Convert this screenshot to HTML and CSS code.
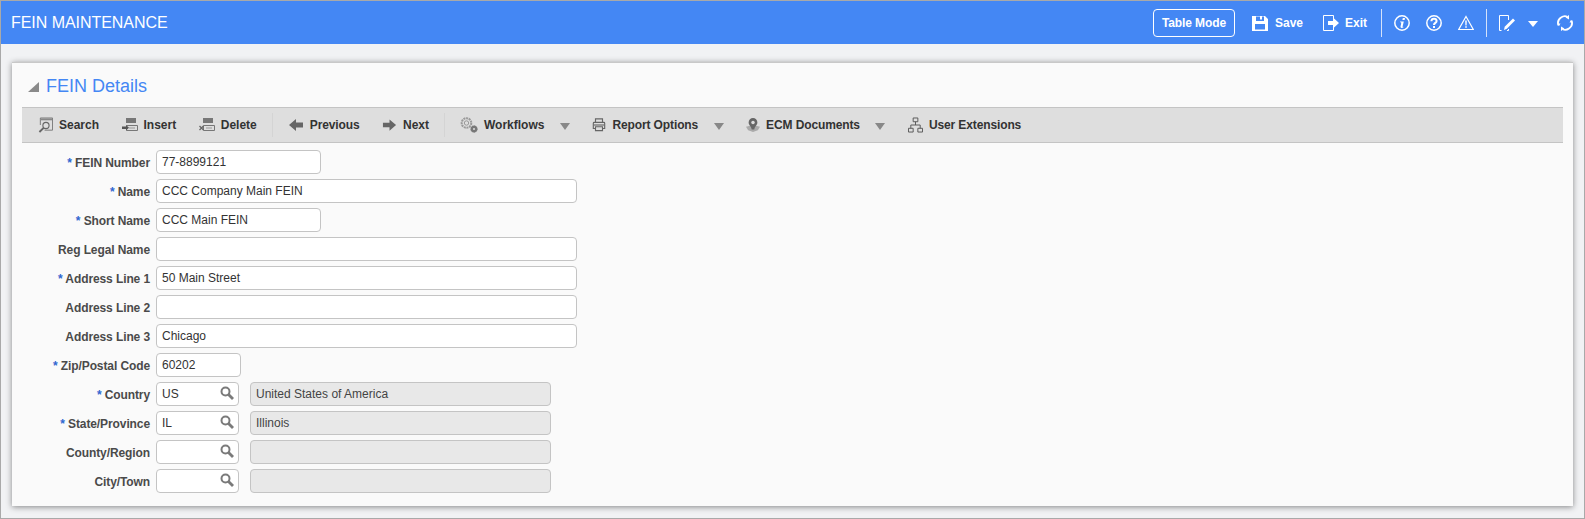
FILE: index.html
```html
<!DOCTYPE html>
<html lang="en">
<head>
<meta charset="utf-8">
<title>FEIN Maintenance</title>
<link rel="stylesheet" href="styles.css">
</head>
<body>
<div class="app">
  <header class="topbar">
    <div class="page-title">FEIN MAINTENANCE</div>
    <div class="top-actions">
      <button class="table-mode">Table Mode</button>
      <span class="top-item save">
        <svg class="top-icon" viewBox="0 0 16 16"><path fill="#fff" fill-rule="evenodd" d="M0 1h13l3 3v12H0zM4 1.500v4.500h8V1.500h-2v3H8v-3zM3 9v5.500h10V9z"/></svg>Save</span>
      <span class="top-item exit">
        <svg class="top-icon" viewBox="0 0 16 16"><path fill="none" stroke="#fff" d="M10.500 4V.5H.5v15h10V12"/><path fill="#fff" d="M5 6h5V2.500l6 5.500-6 5.500V10H5z"/></svg>Exit</span>
      <span class="top-sep"></span>
      <svg class="top-icon glyph" viewBox="0 0 16 16"><circle cx="8" cy="8" r="7.200" fill="none" stroke="#fff" stroke-width="1.500"/><path fill="#fff" d="M8.800 3h2.200l-.4 2h-2.200zM6 6.500h3.800L8.600 11.500q-.1.600.9.300l-.2.800q-3 1-2.800-.8l.8-4q0-.6-1-.6z"/></svg>
      <svg class="top-icon glyph" viewBox="0 0 16 16"><circle cx="8" cy="8" r="7.200" fill="none" stroke="#fff" stroke-width="1.500"/><path fill="none" stroke="#fff" stroke-width="2" d="M5.400 6.200Q5.500 3.800 8 3.800t2.600 2.200c0 2-2.600 1.800-2.600 4"/><rect x="7" y="11" width="2" height="2" fill="#fff"/></svg>
      <svg class="top-icon glyph" viewBox="0 0 16 16"><path fill="none" stroke="#fff" stroke-width="1.200" d="M8 1.500 15.300 14.500H.7z"/><path fill="#fff" d="M7.200 5.500h1.600l-.2 5H7.400zM7.200 11.300h1.600v1.500H7.200z"/></svg>
      <span class="top-sep second"></span>
      <svg class="top-icon" viewBox="0 0 16 16"><path fill="none" stroke="#fff" d="M9.500 5V.5H.5v15h2M9.500 14v1.500H8"/><path fill="#fff" d="M5 15l.7-3.300L14 3.500l2 2-8.200 8.200z"/></svg>
      <span class="top-caret"></span>
      <svg class="top-icon" viewBox="0 0 16 16"><path fill="none" stroke="#fff" stroke-width="1.800" d="M1.500 10.500A6.800 6.800 0 0 1 4 2.500 6.800 6.800 0 0 1 10 1.500M14.500 5.500A6.800 6.800 0 0 1 12 13.500 6.800 6.800 0 0 1 6 14.500"/><path fill="#fff" d="M12 0v4.500L8.500 2.500zM4 16v-4.500L7.500 13.500zM14 5l2 2.500h-3.500zM2 11L0 8.500h3.500z"/></svg>
    </div>
  </header>

  <main class="card">
    <h1 class="card-title"><span class="collapse-tri"></span>FEIN Details</h1>

    <nav class="toolbar">
      <span class="tool"><svg class="tool-icon narrow" viewBox="0 0 16 16"><path fill="none" stroke="#777" d="M2.500 8V.5h13v13H7"/><rect x="3" y="1" width="12" height="2" fill="#888"/><circle cx="8.500" cy="8.500" r="3.300" fill="none" stroke="#666" stroke-width="1.200"/><path stroke="#666" stroke-width="2" d="M6 11l-4.500 4.500"/></svg>Search</span>
      <span class="tool"><svg class="tool-icon" viewBox="0 0 16 16"><path fill="#777" d="M4 1h10v5H4z"/><path fill="none" stroke="#777" d="M4.500 8.500h11v5h-11z"/><path fill="#555" d="M0 9.500h4V8l3 2.800-3 2.800V12H0z"/><path stroke="#999" d="M7 11h6"/></svg>Insert</span>
      <span class="tool"><svg class="tool-icon" viewBox="0 0 16 16"><path fill="#777" d="M4 1h10v5H4z"/><path fill="none" stroke="#777" d="M4.500 8.500h11v5h-11z"/><path stroke="#666" stroke-width="1.300" d="M.5 9l4 4M4.500 9l-4 4"/><path stroke="#999" d="M7 11h6"/></svg>Delete</span>
      <span class="tool-sep"></span>
      <span class="tool"><svg class="tool-icon" viewBox="0 0 16 16"><path fill="#666" d="M1 8l7-6v3.500h7v5H8V14z"/></svg><span class="tight">Previous</span></span>
      <span class="tool"><svg class="tool-icon narrow" viewBox="0 0 16 16"><path fill="#666" d="M15 8L8 2v3.500H1v5h7V14z"/></svg>Next</span>
      <span class="tool-sep"></span>
      <span class="tool"><svg class="tool-icon wide" viewBox="0 0 18 16"><circle cx="6.500" cy="6" r="4.800" fill="none" stroke="#999" stroke-width="2" stroke-dasharray="2 .7"/><circle cx="6.500" cy="6" r="2.200" fill="none" stroke="#999"/><circle cx="14" cy="12" r="3.200" fill="#777" stroke="#777" stroke-dasharray="1.200 .6"/><circle cx="14" cy="12" r="1" fill="#ddd"/></svg>Workflows</span>
      <span class="tool-caret"></span>
      <span class="tool"><svg class="tool-icon narrower" viewBox="0 0 16 16"><path fill="none" stroke="#666" stroke-width="1.300" d="M4 5V1h8v4M4 12H1.500V6q0-1 1-1h11q1 0 1 1v6H12M4 10h8v4.500H4z"/><path stroke="#666" stroke-width="1.300" d="M2 8h12"/></svg><span class="tight">Report Options</span></span>
      <span class="tool-caret"></span>
      <span class="tool"><svg class="tool-icon narrower" viewBox="0 0 16 16"><path fill="#aaa" d="M0 10l8-2 8 2-2.500 4L8 16l-5.500-2z"/><path fill="#666" d="M8 0a5 5 0 0 1 5 5c0 3-3 4-3.500 8h-3C6 9 3 8 3 5a5 5 0 0 1 5-5z"/><circle cx="8" cy="5" r="2" fill="#ddd"/></svg><span class="tight">ECM Documents</span></span>
      <span class="tool-caret"></span>
      <span class="tool"><svg class="tool-icon narrow" viewBox="0 0 16 16"><path fill="none" stroke="#555" d="M5.500.5h5v4h-5zM.5 11.500h5v4h-5zM10.500 11.500h5v4h-5zM8 4.500V8M3 11.500V8h10v3.500"/></svg><span class="tight">User Extensions</span></span>
    </nav>

    <form class="form">
      <div class="row"><label class="label"><span class="req">*</span> FEIN Number</label><input class="input w-md" value="77-8899121"></div>
      <div class="row"><label class="label"><span class="req">*</span> Name</label><input class="input w-lg" value="CCC Company Main FEIN"></div>
      <div class="row"><label class="label"><span class="req">*</span> Short Name</label><input class="input w-md" value="CCC Main FEIN"></div>
      <div class="row"><label class="label">Reg Legal Name</label><input class="input w-lg" value=""></div>
      <div class="row"><label class="label"><span class="req">*</span> Address Line 1</label><input class="input w-lg" value="50 Main Street"></div>
      <div class="row"><label class="label">Address Line 2</label><input class="input w-lg" value=""></div>
      <div class="row"><label class="label">Address Line 3</label><input class="input w-lg" value="Chicago"></div>
      <div class="row"><label class="label"><span class="req">*</span> Zip/Postal Code</label><input class="input w-sm" value="60202"></div>
      <div class="row"><label class="label"><span class="req">*</span> Country</label><span class="lookup"><input class="input w-lookup" value="US"><svg class="mag" viewBox="0 0 14 14"><circle cx="5.500" cy="5.500" r="4" fill="none" stroke="#7a7a7a" stroke-width="2"/><path stroke="#7a7a7a" stroke-width="2.800" d="M8.500 8.500l4.500 4.500"/></svg></span><input class="input desc" value="United States of America" readonly></div>
      <div class="row"><label class="label"><span class="req">*</span> State/Province</label><span class="lookup"><input class="input w-lookup" value="IL"><svg class="mag" viewBox="0 0 14 14"><circle cx="5.500" cy="5.500" r="4" fill="none" stroke="#7a7a7a" stroke-width="2"/><path stroke="#7a7a7a" stroke-width="2.800" d="M8.500 8.500l4.500 4.500"/></svg></span><input class="input desc" value="Illinois" readonly></div>
      <div class="row"><label class="label">County/Region</label><span class="lookup"><input class="input w-lookup" value=""><svg class="mag" viewBox="0 0 14 14"><circle cx="5.500" cy="5.500" r="4" fill="none" stroke="#7a7a7a" stroke-width="2"/><path stroke="#7a7a7a" stroke-width="2.800" d="M8.500 8.500l4.500 4.500"/></svg></span><input class="input desc" value="" readonly></div>
      <div class="row"><label class="label">City/Town</label><span class="lookup"><input class="input w-lookup" value=""><svg class="mag" viewBox="0 0 14 14"><circle cx="5.500" cy="5.500" r="4" fill="none" stroke="#7a7a7a" stroke-width="2"/><path stroke="#7a7a7a" stroke-width="2.800" d="M8.500 8.500l4.500 4.500"/></svg></span><input class="input desc" value="" readonly></div>
    </form>
  </main>
</div>
</body>
</html>
```

FILE: styles.css
```css
* { box-sizing: border-box; }
html, body { margin: 0; padding: 0; height: 519px; overflow: hidden; }
body { font-family: "Liberation Sans", Arial, sans-serif; font-size: 12px; color: #333; }

.app { height: 519px; background: #f1f2f4; border: 1px solid #a9a9a9; }

.topbar {
  height: 43px;
  background: #4487f4;
  color: #fff;
  display: flex;
  align-items: center;
  justify-content: space-between;
  padding: 0 11px 0 10px;
}
.page-title { font-size: 16px; letter-spacing: -.05px; }
.top-actions { display: flex; align-items: center; }
.table-mode {
  width: 82px; height: 28px;
  margin-right: 17px;
  background: transparent;
  border: 1px solid #fff;
  border-radius: 4px;
  color: #fff;
  font: bold 12px "Liberation Sans", Arial, sans-serif;
  letter-spacing: -.1px;
  padding: 0;
}
.top-item { display: flex; align-items: center; gap: 6px; font-weight: bold; white-space: nowrap; }
.top-item.save { gap: 7px; margin-right: 20px; }
.top-icon { width: 16px; height: 16px; flex: none; display: block; }
.top-sep { width: 1px; height: 28px; background: #d5e2fa; margin: 0 12px 0 14px; }
.top-sep.second { margin: 0 12px 0 12px; }
.glyph + .glyph { margin-left: 16px; }
.top-caret {
  width: 0; height: 0;
  margin: 2px 19px 0 13px;
  border-left: 5px solid transparent;
  border-right: 5px solid transparent;
  border-top: 6px solid #fff;
}

.card {
  height: 444px;
  margin: 18px 11px 0;
  padding: 0 10px;
  background: #fafafa;
  border-top: 1px solid #c8c8c8;
  box-shadow: 0 1px 6px rgba(0, 0, 0, .45);
}
.card-title {
  height: 44px;
  margin: 0;
  display: flex;
  align-items: center;
  padding: 3px 0 0 6px;
  font-size: 18px;
  font-weight: normal;
  color: #4487f4;
}
.collapse-tri {
  width: 0; height: 0;
  margin-right: 7px;
  border-bottom: 10px solid #8a8a8a;
  border-left: 11px solid transparent;
}

.toolbar {
  height: 36px;
  display: flex;
  align-items: center;
  gap: 22.5px;
  padding-left: 16px;
  background: #dedede;
  border-top: 1px solid #c4c4c4;
  border-bottom: 1px solid #c4c4c4;
  font-weight: bold;
  white-space: nowrap;
}
.tool { display: flex; align-items: center; gap: 6px; }
.tight { letter-spacing: -.12px; }
.tool-icon { width: 16px; height: 16px; flex: none; display: block; }
.tool-icon.wide { width: 18px; }
.tool-icon.narrow { width: 15px; }
.tool-icon.narrower { width: 14px; }
.tool-sep { width: 1px; height: 24px; background: #d4d4d4; margin: 0 -7.5px; }
.tool-caret {
  width: 0; height: 0;
  margin: 2px 0 0 -7px;
  border-left: 5px solid transparent;
  border-right: 5px solid transparent;
  border-top: 7px solid #888;
}

.form { padding-top: 4px; }
.row { height: 29px; display: flex; align-items: center; }
.label {
  width: 128px;
  margin-right: 6px;
  padding-top: 2px;
  text-align: right;
  font-weight: bold;
  color: #4a4a4a;
  letter-spacing: -.1px;
  white-space: nowrap;
}
.req { color: #2f66d0; }
.input {
  height: 24px;
  padding: 1px 5px 0;
  background: #fff;
  border: 1px solid #c4c4c4;
  border-radius: 4px;
  font: 12px "Liberation Sans", Arial, sans-serif;
  color: #333;
  outline: none;
}
.w-sm { width: 85px; }
.w-md { width: 165px; }
.w-lg { width: 421px; }
.w-lookup { width: 83px; }
.lookup { position: relative; display: block; margin-right: 11px; height: 24px; }
.mag { position: absolute; top: 4px; right: 5px; width: 14px; height: 14px; }
.desc { width: 301px; background: #e8e8e8; color: #444; }
```
